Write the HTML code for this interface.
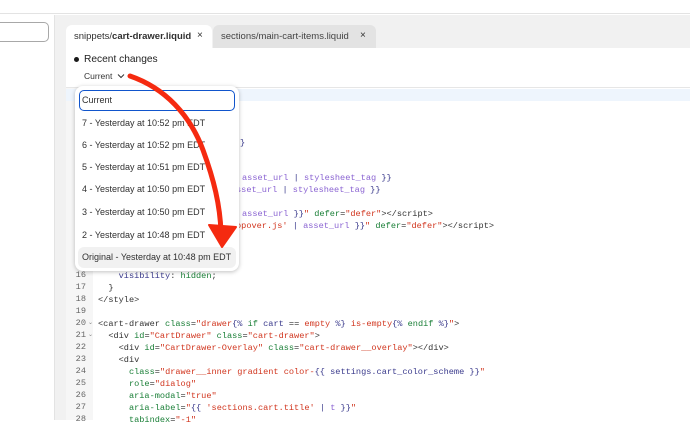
<!DOCTYPE html>
<html><head><style>
*{margin:0;padding:0;box-sizing:border-box}
body{width:690px;height:420px;overflow:hidden;background:#fff;font-family:"Liberation Sans",sans-serif;position:relative;color:#303030}
.a{position:absolute}
.code{font-family:"Liberation Mono",monospace;font-size:8.6px;white-space:pre;color:#333}
.ln{font-family:"Liberation Mono",monospace;font-size:8.6px;color:#666;width:20px;text-align:right}
.p{color:#8a63d2}.b{color:#3a3a8c}.g{color:#1a7f37}.r{color:#d1361f}.k{color:#1f1f1f}
.item{position:absolute;left:82px;font-size:9px;color:#303030}
</style></head><body>
<div class="a" style="left:0;top:0;width:690px;height:14px;border-bottom:1px solid #e3e3e3;background:#fff"></div>
<div class="a" style="left:-10px;top:22px;width:59px;height:20px;border:1px solid #a8a8a8;border-radius:5px"></div>
<div class="a" style="left:54px;top:15px;width:636px;height:405px;background:#f1f1f1;border-left:1px solid #e3e3e3"></div>
<div class="a" style="left:66px;top:25px;width:146px;height:24px;background:#fff;border-radius:6px 6px 0 0"></div>
<div class="a" style="left:74px;top:31px;font-size:9.5px">snippets/<b>cart-drawer.liquid</b></div>
<div class="a" style="left:197px;top:30px;font-size:10px">×</div>
<div class="a" style="left:213px;top:25px;width:163px;height:23px;background:#e3e3e3;border-radius:6px 6px 0 0"></div>
<div class="a" style="left:221px;top:31px;font-size:9.5px;color:#444">sections/main-cart-items.liquid</div>
<div class="a" style="left:360px;top:30px;font-size:10px">×</div>
<div class="a" style="left:66px;top:48px;width:624px;height:372px;background:#fff"></div>
<div class="a" style="left:74px;top:57px;width:5px;height:5px;border-radius:50%;background:#1a1a1a"></div>
<div class="a" style="left:84px;top:54px;font-size:10.2px;color:#222">Recent changes</div>
<div class="a" style="left:84px;top:71px;font-size:8.5px;color:#333">Current</div>
<svg class="a" style="left:117px;top:73px" width="8" height="6"><path d="M1 1.5L4 4.5L7 1.5" stroke="#333" stroke-width="1" fill="none"/></svg>
<div class="a" style="left:66px;top:87px;width:624px;height:1px;background:#e6e6e6"></div>
<div class="a" style="left:66px;top:88px;width:27px;height:332px;background:#f6f6f6"></div>
<div class="a" style="left:66px;top:89px;width:624px;height:12px;background:#eef5fd"></div>
<div class="a code" style="left:240px;top:138px"><span class="b">}</span></div>
<div class="a code" style="left:242px;top:173px"><span class="p">asset_url</span> <span class="b">|</span> <span class="p">stylesheet_tag</span> <span class="b">}}</span></div>
<div class="a code" style="left:236px;top:185px"><span class="p">sset_url</span> <span class="b">|</span> <span class="p">stylesheet_tag</span> <span class="b">}}</span></div>
<div class="a code" style="left:242px;top:209px"><span class="p">asset_url</span> <span class="b">}}</span><span class="r">"</span> <span class="g">defer</span>=<span class="r">"defer"</span>&gt;&lt;/script&gt;</div>
<div class="a code" style="left:236px;top:221px"><span class="r">opover.js'</span> <span class="b">|</span> <span class="p">asset_url</span> <span class="b">}}</span><span class="r">"</span> <span class="g">defer</span>=<span class="r">"defer"</span>&gt;&lt;/script&gt;</div>
<div class="a ln" style="left:66px;top:270px">16</div>
<div class="a ln" style="left:66px;top:282px">17</div>
<div class="a ln" style="left:66px;top:294px">18</div>
<div class="a ln" style="left:66px;top:306px">19</div>
<div class="a ln" style="left:66px;top:318px">20</div>
<div class="a ln" style="left:66px;top:330px">21</div>
<div class="a ln" style="left:66px;top:342px">22</div>
<div class="a ln" style="left:66px;top:354px">23</div>
<div class="a ln" style="left:66px;top:366px">24</div>
<div class="a ln" style="left:66px;top:378px">25</div>
<div class="a ln" style="left:66px;top:390px">26</div>
<div class="a ln" style="left:66px;top:402px">27</div>
<div class="a ln" style="left:66px;top:414px">28</div>
<div class="a" style="left:88px;top:319px;font-size:6px;color:#888">⌄</div>
<div class="a" style="left:88px;top:331px;font-size:6px;color:#888">⌄</div>
<div class="a code" style="left:98px;top:270px;line-height:12px">    <span class="b">visibility</span>: <span class="g">hidden</span>;
  }
&lt;/style&gt;

&lt;cart-drawer <span class="g">class</span>=<span class="r">"drawer</span><span class="b">{%</span> <span class="g">if</span> <span class="b">cart</span> == <span class="r">empty</span> <span class="b">%}</span><span class="r"> is-empty</span><span class="b">{%</span> <span class="g">endif</span> <span class="b">%}</span><span class="r">"</span>&gt;
  &lt;div <span class="g">id</span>=<span class="r">"CartDrawer"</span> <span class="g">class</span>=<span class="r">"cart-drawer"</span>&gt;
    &lt;div <span class="g">id</span>=<span class="r">"CartDrawer-Overlay"</span> <span class="g">class</span>=<span class="r">"cart-drawer__overlay"</span>&gt;&lt;/div&gt;
    &lt;div
      <span class="g">class</span>=<span class="r">"drawer__inner gradient color-</span><span class="b">{{</span> <span class="b">settings.cart_color_scheme</span> <span class="b">}}</span><span class="r">"</span>
      <span class="g">role</span>=<span class="r">"dialog"</span>
      <span class="g">aria-modal</span>=<span class="r">"true"</span>
      <span class="g">aria-label</span>=<span class="r">"</span><span class="b">{{</span> <span class="r">'sections.cart.title'</span> <span class="b">|</span> <span class="p">t</span> <span class="b">}}</span><span class="r">"</span>
      <span class="g">tabindex</span>=<span class="r">"-1"</span></div>
<div class="a" style="left:75px;top:86px;width:164px;height:185px;background:#fff;border-radius:8px;box-shadow:0 1px 4px rgba(0,0,0,.25)"></div>
<div class="a" style="left:79px;top:90px;width:156px;height:21px;border:1.5px solid #1155cc;border-radius:5px"></div>
<div class="item" style="top:95px">Current</div>
<div class="item" style="top:118px">7 - Yesterday at 10:52 pm EDT</div>
<div class="item" style="top:140px">6 - Yesterday at 10:52 pm EDT</div>
<div class="item" style="top:162px">5 - Yesterday at 10:51 pm EDT</div>
<div class="item" style="top:184px">4 - Yesterday at 10:50 pm EDT</div>
<div class="item" style="top:207px">3 - Yesterday at 10:50 pm EDT</div>
<div class="item" style="top:230px">2 - Yesterday at 10:48 pm EDT</div>
<div class="a" style="left:78px;top:247px;width:158px;height:21px;background:#f1f1f1;border-radius:6px"></div>
<div class="item" style="top:252px">Original - Yesterday at 10:48 pm EDT</div>
<svg class="a" style="left:0;top:0" width="690" height="420">
<path d="M130 76 C165 88 190 115 203 150 C214 180 220 205 221 232" stroke="#f52a10" stroke-width="5" fill="none" stroke-linecap="round"/>
<path d="M209 225 L236 227 L222 247 Z" fill="#f52a10" stroke="#f52a10" stroke-width="2" stroke-linejoin="round"/>
</svg>
</body></html>
